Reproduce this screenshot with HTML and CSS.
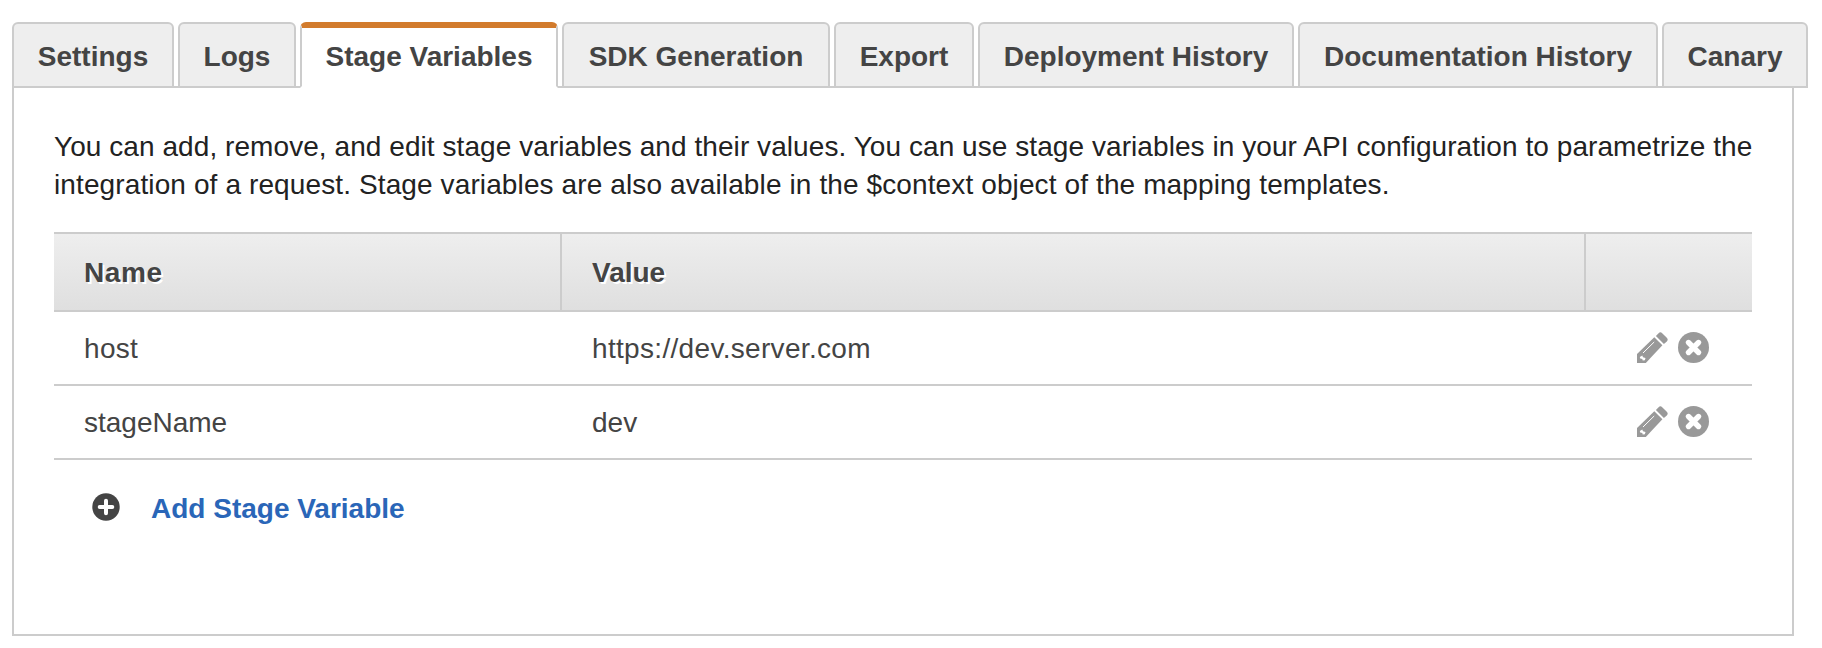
FILE: index.html
```html
<!DOCTYPE html>
<html lang="en">
<head>
<meta charset="utf-8">
<title>Stage Variables</title>
<link rel="stylesheet" href="styles.css">
</head>
<body>
<svg class="sprite" aria-hidden="true">
  <symbol id="pencil" viewBox="0 0 31 31">
    <path fill="#999" d="M0 31V22L17.300 5.200L25.400 13.300L8.800 31Z"/>
    <path fill="#999" d="M18.900 3.900L21.600 1.200Q23.400-.6 25.200 1.200L29.800 5.800Q31.600 7.600 29.800 9.400L26.900 12Z"/>
    <path fill="none" stroke="#fff" stroke-width="1" d="M6 21L17.200 10"/>
    <path fill="#fff" d="M2.800 25L5.300 23.600L6 25.300L8.500 26L7.900 28.200L5.700 28.600L5.300 26.900L3.200 26.600Z"/>
  </symbol>
  <symbol id="remove" viewBox="0 0 31 31">
    <circle cx="15.500" cy="15.500" r="15.500" fill="#999"/>
    <path d="M10.500 10.500L20.500 20.500M20.500 10.500L10.500 20.500" stroke="#fff" stroke-width="5.400" stroke-linecap="round"/>
  </symbol>
  <symbol id="plus" viewBox="0 0 28 28">
    <circle cx="14" cy="14" r="13.700" fill="#444"/>
    <path d="M14 7.700V20.300M7.700 14H20.300" stroke="#fff" stroke-width="4" stroke-linecap="round"/>
  </symbol>
</svg>
<nav class="tabs">
  <a class="tab settings">Settings</a>
  <a class="tab logs">Logs</a>
  <a class="tab variables active">Stage Variables</a>
  <a class="tab sdk">SDK Generation</a>
  <a class="tab export">Export</a>
  <a class="tab deployment">Deployment History</a>
  <a class="tab documentation">Documentation History</a>
  <a class="tab canary">Canary</a>
</nav>
<main class="panel">
  <p class="intro"><span class="line first">You can add, remove, and edit stage variables and their values. You can use stage variables in your API configuration to parametrize the</span> <span class="line second">integration of a request. Stage variables are also available in the $context object of the mapping templates.</span></p>
  <div class="table">
    <div class="row head"><div class="cell name">Name</div><div class="cell">Value</div><div class="cell"></div></div>
    <div class="row">
      <div class="cell url">host</div><div class="cell url">https://dev.server.com</div>
      <div class="cell actions"><svg class="icon"><use href="#pencil"/></svg><svg class="icon"><use href="#remove"/></svg></div>
    </div>
    <div class="row">
      <div class="cell">stageName</div><div class="cell">dev</div>
      <div class="cell actions"><svg class="icon"><use href="#pencil"/></svg><svg class="icon"><use href="#remove"/></svg></div>
    </div>
  </div>
  <div class="add"><svg class="plus"><use href="#plus"/></svg><a class="link">Add Stage Variable</a></div>
</main>
</body>
</html>
```
FILE: styles.css
```css
* { box-sizing: border-box; }
body {
  margin: 0;
  padding: 22px 14px 0 12px;
  height: 648px;
  overflow: hidden;
  background: #fff;
  color: #444;
  font: 28px/38px "Liberation Sans", Arial, sans-serif;
}
.sprite { display: none; }
.tabs { display: flex; gap: 4px; height: 66px; position: relative; }
.tab {
  flex: none;
  height: 66px;
  padding-top: 14px;
  border: 2px solid #ccc;
  border-radius: 6px 6px 0 0;
  background: #eee;
  font-weight: bold;
  text-align: center;
  white-space: nowrap;
}
.settings { width: 162px; }
.logs { width: 118px; }
.variables { width: 258px; }
.sdk { width: 268px; }
.export { width: 140px; }
.deployment { width: 316px; }
.documentation { width: 360px; }
.canary { width: 146px; }
.tab.active {
  padding-top: 10px;
  border-top: 6px solid #d27b2c;
  border-bottom-color: #fff;
  background: #fff;
}
.panel {
  width: 1782px;
  height: 550px;
  margin-top: -2px;
  padding: 40px 40px 0;
  border: 2px solid #ccc;
}
.intro { margin: 0; height: 76px; color: #222; }
.line { display: block; white-space: nowrap; }
.first { letter-spacing: 0.066px; }
.second { letter-spacing: 0.115px; }
.table { margin-top: 28px; border-top: 2px solid #ccc; }
.row {
  display: grid;
  grid-template-columns: 508px 1024px 166px;
  height: 74px;
  border-bottom: 2px solid #ccc;
}
.cell { padding: 18px 0 0 30px; white-space: nowrap; }
.url { letter-spacing: 0.32px; }
.name { letter-spacing: 0.6px; }
.head {
  height: 78px;
  background: linear-gradient(#eee, #dfdfdf);
  font-weight: bold;
  text-shadow: 2px 2px 0 #fff;
}
.head .cell { padding-top: 20px; border-right: 2px solid #ccc; }
.head .cell:last-child { border-right: 0; }
.row .actions { display: flex; gap: 10px; padding: 20px 0 0 51px; }
.icon { width: 31px; height: 31px; }
.add { display: flex; padding: 30px 0 0 38px; }
.plus { width: 28px; height: 28px; margin-top: 3px; }
.link { margin-left: 31px; color: #2a66b8; font-weight: bold; }
```
